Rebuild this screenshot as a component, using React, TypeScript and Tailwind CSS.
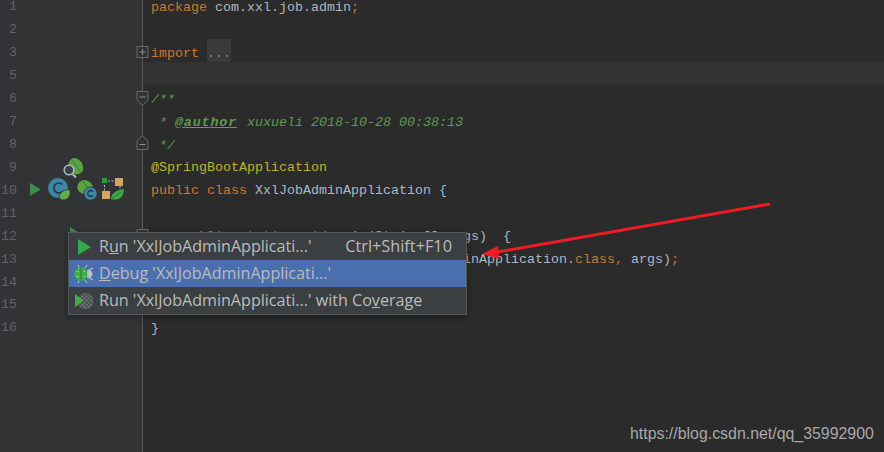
import React from 'react';

const LINE_NUMBERS = [1, 2, 3, 5, 6, 7, 8, 9, 10, 11, 12, 13, 14, 15, 16];

const Kw: React.FC<{ children: React.ReactNode }> = ({ children }) => <span className="text-[#cc7832]">{children}</span>;

const CODE_LINES: React.ReactNode[] = [
  <><Kw>package</Kw> com.xxl.job.admin<Kw>;</Kw></>,
  null,
  <><Kw>import</Kw> <span className="inline-block h-[23px] bg-[#3a3a3a] text-[#808080]">...</span></>,
  null,
  <span className="italic text-[#629755]">/**</span>,
  <span className="italic text-[#629755]"> * <span className="pr-[2px] font-bold tracking-[0.86px] underline">@author</span> xuxueli 2018-10-28 00:38:13</span>,
  <span className="italic text-[#629755]"> */</span>,
  <span className="text-[#bbb529]">@SpringBootApplication</span>,
  <><Kw>public class</Kw> XxlJobAdminApplication {'{'}</>,
  null,
  <>    <Kw>public static void</Kw> main(String[] args)  {'{'}</>,
  <>        SpringApplication.run(XxlJobAdminApplication.<Kw>class, </Kw>args)<Kw>;</Kw></>,
  <>    {'}'}</>,
  null,
  <>{'}'}</>,
];

const GutterIcons = () => (
  <svg className="absolute left-0 top-0" width="142" height="240" viewBox="0 0 142 240" fill="none">
    {/* run markers */}
    <path d="M30 183 L41 189.5 L30 196 Z" fill="#3f8a4f" />
    <path d="M70 227 L78 232 L70 237 Z" fill="#3f8a4f" />
    {/* leaf + magnifier */}
    <path d="M73 158 C80 158 84 164 83 170 C82 174 78 175 75 174 C68 172 65 163 73 158 Z" fill="#5ba445" />
    <path d="M72 160 L81 173" stroke="#3b7d35" strokeWidth="1" />
    <circle cx="69" cy="170" r="4.8" fill="#3a4044" stroke="#a9b4bb" strokeWidth="1.6" />
    <path d="M72.5 174 L76 177.5" stroke="#a9b4bb" strokeWidth="2" />
    {/* class C + leaf */}
    <circle cx="58" cy="188" r="10" fill="#3a87a8" />
    <path d="M62.5 184.5 A5 5 0 1 0 62.5 191.5" stroke="#26333a" strokeWidth="1.7" />
    <path d="M59 197 C60 191 66 189 70 190 C71 196 68 200 63 200 C61 200 60 199 59 197 Z" fill="#62ac4a" stroke="#313335" strokeWidth="0.8" />
    {/* leaf + small C */}
    <path d="M84 180 C90 180 94 186 93 190 C88 196 81 195 78 190 C76 185 79 181 84 180 Z" fill="#5ba445" />
    <path d="M83 181 L91 193" stroke="#3b7d35" strokeWidth="1" />
    <circle cx="90.5" cy="193.5" r="6.6" fill="#3a87a8" stroke="#313335" strokeWidth="0.8" />
    <path d="M93 191.5 A3 3 0 1 0 93 195.5" stroke="#26333a" strokeWidth="1.3" />
    {/* bean graph */}
    <path d="M108 181 H116 M104.5 185 V191 M120 186 V190" stroke="#b9bcbd" strokeWidth="1" strokeDasharray="2 1.5" />
    <rect x="102" y="178" width="5" height="5" fill="#27a02f" />
    <rect x="115" y="178" width="8" height="8" fill="#d6a45e" />
    <rect x="102" y="191" width="8" height="8" fill="#d6a45e" />
    <path d="M111 199 C111 193 117 190 124 189 C124 195 121 199 116 199.5 C114 199.7 112 199.5 111 199 Z" fill="#3fa84a" />
    <path d="M112 198.5 L121 192" stroke="#246b2f" strokeWidth="0.8" />
  </svg>
);

const FoldMarkers = () => (
  <svg className="absolute left-[136px] top-0" width="13" height="240" viewBox="0 0 13 240" fill="none" stroke="#686a6c">
    <path d="M1 46.5 H12 V57.5 H1 Z" fill="#313335" />
    <path d="M3.5 52 H9.5 M6.5 49 V55" stroke="#8a8c8e" />
    <path d="M1 91.5 H12 V100 L6.5 105.5 L1 100 Z" fill="#313335" />
    <path d="M3.5 97 H9.5" stroke="#8a8c8e" />
    <path d="M6.5 135.5 L12 141 V149.5 H1 V141 Z" fill="#313335" />
    <path d="M3.5 144.5 H9.5" stroke="#8a8c8e" />
    <path d="M1 229.5 H12 V240 H1 Z" fill="#313335" />
  </svg>
);

const BugIcon = () => (
  <svg width="20" height="20" viewBox="0 0 20 20" fill="none">
    <path d="M11 4 L13 1 M11 16 L13 19 M5 3.5 L4 1 M5 16.5 L4 19 M13 7 L19 4 M13 13 L19 16 M13 10 H19" stroke="#c9ced6" strokeWidth="1" />
    <ellipse cx="15.5" cy="10" rx="2.6" ry="4" fill="#b9c0c8" />
    <ellipse cx="6.8" cy="10" rx="6.5" ry="6.8" fill="#3fae49" />
    <path d="M7 3.4 V16.6" stroke="#2a7d34" strokeWidth="1" />
    <path d="M2 7.5 H5 M2 12.5 H5 M9 7.5 H11.5 M9 12.5 H11.5" stroke="#7fd086" strokeWidth="0.9" />
  </svg>
);

const CoverageIcon = () => (
  <svg width="20" height="20" viewBox="0 0 20 20" fill="none">
    <defs>
      <pattern id="hatch" width="3" height="3" patternUnits="userSpaceOnUse" patternTransform="rotate(45)">
        <rect width="3" height="3" fill="#4b4d4f" />
        <rect width="1.5" height="1.5" fill="#8c8e90" />
      </pattern>
    </defs>
    <circle cx="11.5" cy="10" r="8" fill="url(#hatch)" />
    <path d="M1 3 L9.5 9.5 L1 16 Z" fill="#3fae49" />
  </svg>
);

const PopupMenu = () => (
  <div className="absolute left-[68px] top-[232px] w-[399px] border border-[#555759] bg-[#3c3f41] font-['Open_Sans','Noto_Sans',sans-serif] text-[16.1px] text-[#bbbbbb] shadow-[0_2px_6px_rgba(0,0,0,0.35)]">
    <div className="flex h-[27px] items-center">
      <span className="flex w-[30px] justify-center">
        <svg width="15" height="18" viewBox="0 0 15 18"><path d="M1 1 L14 9 L1 17 Z" fill="#34a94a" /></svg>
      </span>
      <span>R<u>u</u>n 'XxlJobAdminApplicati...'</span>
      <span className="ml-auto pr-[14px] text-[16.3px]">Ctrl+Shift+F10</span>
    </div>
    <div className="flex h-[27px] items-center bg-[#4b6eaf]">
      <span className="flex w-[30px] justify-center"><BugIcon /></span>
      <span><u>D</u>ebug 'XxlJobAdminApplicati...'</span>
    </div>
    <div className="flex h-[27px] items-center">
      <span className="flex w-[30px] justify-center"><CoverageIcon /></span>
      <span>Run 'XxlJobAdminApplicati...' with Co<u>v</u>erage</span>
    </div>
  </div>
);

export default function App() {
  return (
    <div className="relative flex h-[452px] w-[884px] overflow-hidden bg-[#2b2b2b] font-['Liberation_Mono',monospace] text-[13.33px] text-[#a9b7c6]">
      <div className="relative h-full w-[143px] shrink-0 border-r border-[#555759] bg-[#313335]">
        <div className="-mt-[4px] flex flex-col">
          {LINE_NUMBERS.map((n) => (
            <div key={n} className="flex h-[22.93px] items-center justify-end pr-[125px] text-[#606366]">{n}</div>
          ))}
        </div>
        <GutterIcons />
      </div>
      <FoldMarkers />
      <div className="-mt-[7px] flex min-w-0 flex-1 flex-col">
        {CODE_LINES.map((line, i) => (
          <div key={i} className={`h-[22.93px] whitespace-pre pl-[8px] leading-[29px] ${i === 3 ? 'bg-[#323232]' : ''}`}>
            {line}
          </div>
        ))}
      </div>
      <PopupMenu />
      <svg className="absolute left-[470px] top-[195px]" width="310" height="70" viewBox="470 195 310 70" fill="none">
        <path d="M770 204 L492 253" stroke="#ee1c25" strokeWidth="3" />
        <path d="M482 254 L498 246 L499 259 Z" fill="#ee1c25" />
      </svg>
      <span className="absolute left-[630px] top-[422px] font-['Liberation_Sans',sans-serif] text-[15.9px] text-[#a8a8a8]">https://blog.csdn.net/qq_35992900</span>
    </div>
  );
}
